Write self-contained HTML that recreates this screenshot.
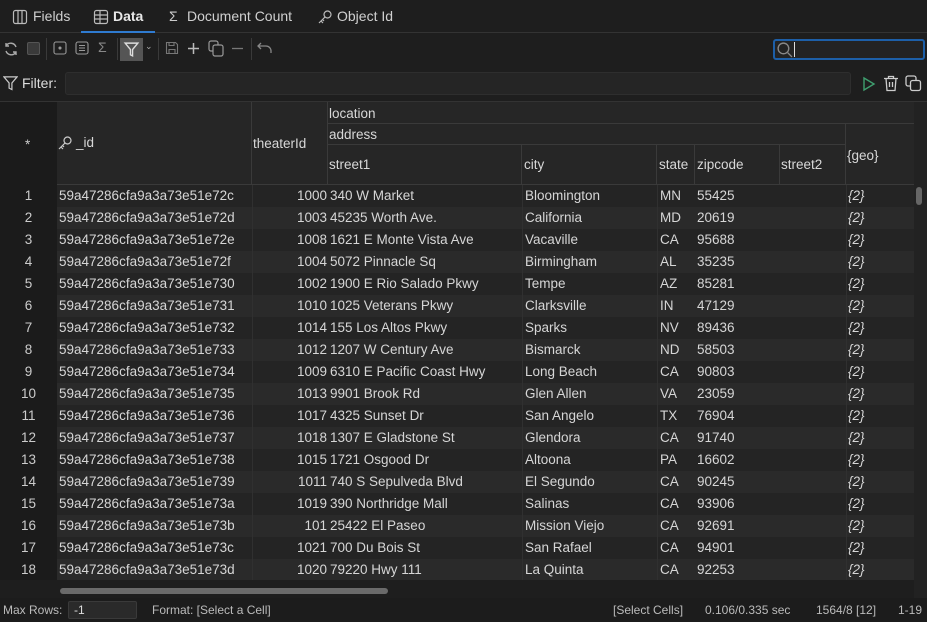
<!DOCTYPE html>
<html><head><style>
*{box-sizing:border-box;margin:0;padding:0}
body{width:927px;height:622px;background:#1e1e1e;color:#d8d8d8;font-family:"Liberation Sans",sans-serif;font-size:13.5px;position:relative;overflow:hidden}
.abs{position:absolute}
.tab{position:absolute;top:0;height:32px;line-height:33px;font-size:14px;color:#d0d0d0}
svg{position:absolute}
.t{position:absolute;white-space:nowrap}
.hd{position:absolute;background:#262626;border-right:1px solid #3a3a3a;border-bottom:1px solid #3a3a3a;color:#d0d0d0}
.row{position:absolute;left:0;width:914px;height:22px}
.c{position:absolute;top:0;height:22px;line-height:22px;white-space:nowrap;color:#d6d6d6;font-size:13.5px}
</style></head><body>
<!-- tabs -->
<div class="abs" style="left:0;top:32px;width:927px;height:1px;background:#333"></div>
<div class="abs" style="left:81px;top:31px;width:74px;height:2px;background:#2f7bd0"></div>
<svg style="left:12px;top:9px" width="16" height="16" viewBox="0 0 16 16" fill="none" stroke="#bbb" stroke-width="1.2"><rect x="1.5" y="1.5" width="13" height="13" rx="2"/><path d="M6 2v12M10 2v12"/></svg>
<div class="tab" style="left:33px">Fields</div>
<svg style="left:93px;top:9px" width="16" height="16" viewBox="0 0 16 16" fill="none" stroke="#bbb" stroke-width="1.2"><rect x="1.5" y="1.5" width="13" height="13" rx="2"/><path d="M2 6h12M2 10h12M7 2v12"/></svg>
<div class="tab" style="left:113px;font-weight:bold;color:#e8e8e8">Data</div>
<div class="tab" style="left:169px;color:#ccc">Σ</div>
<div class="tab" style="left:187px">Document Count</div>
<svg style="left:317px;top:9px" width="16" height="16" viewBox="0 0 16 16" fill="none" stroke="#bbb" stroke-width="1.2"><circle cx="10.5" cy="5.5" r="3.5"/><path d="M8 8l-6 6M4 12l2 2M5.5 10.5l1.5 1.5"/></svg>
<div class="tab" style="left:337px">Object Id</div>
<!-- toolbar -->
<svg style="left:3px;top:41px" width="16" height="16" viewBox="0 0 16 16" fill="none" stroke="#aaa" stroke-width="1.4"><path d="M13 6A5.5 5.5 0 0 0 3 5M3 10a5.5 5.5 0 0 0 10 1M3 2v3h3M13 14v-3h-3"/></svg>
<div class="abs" style="left:27px;top:42px;width:13px;height:13px;background:#3a3a3a;border:1px solid #555;border-radius:2px"></div>
<div class="abs" style="left:46px;top:38px;width:1px;height:22px;background:#3a3a3a"></div>
<svg style="left:53px;top:41px" width="14" height="14" viewBox="0 0 14 14" fill="none" stroke="#999" stroke-width="1.1"><rect x="1" y="1" width="12" height="12" rx="2"/><circle cx="7" cy="7" r="1" fill="#999"/></svg>
<svg style="left:75px;top:41px" width="14" height="14" viewBox="0 0 14 14" fill="none" stroke="#999" stroke-width="1.1"><rect x="1" y="1" width="12" height="12" rx="2"/><path d="M4 4.5h6M4 7h6M4 9.5h6"/></svg>
<div class="t" style="left:98px;top:39px;color:#888;font-size:14px">Σ</div>
<div class="abs" style="left:117px;top:38px;width:1px;height:22px;background:#3a3a3a"></div>
<div class="abs" style="left:120px;top:38px;width:23px;height:23px;background:#555"></div>
<svg style="left:123px;top:41px" width="17" height="17" viewBox="0 0 16 16" fill="none" stroke="#ddd" stroke-width="1.3"><path d="M2 2h12l-5 6v6l-2-1V8z"/></svg>
<div class="t" style="left:145px;top:41px;color:#aaa;font-size:9px">⌄</div>
<div class="abs" style="left:158px;top:38px;width:1px;height:22px;background:#3a3a3a"></div>
<svg style="left:165px;top:41px" width="14" height="14" viewBox="0 0 14 14" fill="none" stroke="#777" stroke-width="1.1"><path d="M1.5 1.5h9l2 2v9h-11z M4 1.5v3h5v-3 M4 12.5v-4h6v4"/></svg>
<svg style="left:187px;top:42px" width="13" height="13" viewBox="0 0 13 13" stroke="#bbb" stroke-width="1.5"><path d="M6.5 1v11M1 6.5h11"/></svg>
<svg style="left:208px;top:40px" width="16" height="17" viewBox="0 0 16 17" fill="none" stroke="#999" stroke-width="1.2"><rect x="1" y="1" width="9" height="10" rx="2"/><rect x="5" y="5" width="10" height="11" rx="2" fill="#1e1e1e"/></svg>
<svg style="left:231px;top:42px" width="13" height="13" viewBox="0 0 13 13" stroke="#777" stroke-width="1.3"><path d="M1 6.5h11"/></svg>
<div class="abs" style="left:251px;top:38px;width:1px;height:22px;background:#3a3a3a"></div>
<svg style="left:257px;top:42px" width="15" height="13" viewBox="0 0 15 13" fill="none" stroke="#888" stroke-width="1.3"><path d="M4 1L1 4l3 3M1 4h8a5 5 0 0 1 5 5v2"/></svg>
<div class="abs" style="left:773px;top:39px;width:152px;height:21px;border:2px solid #1d5fa8;border-radius:3px;background:#232323"></div>
<svg style="left:776px;top:41px" width="17" height="17" viewBox="0 0 16 16" fill="none" stroke="#888" stroke-width="1.3"><circle cx="7" cy="7" r="5"/><path d="M11 11l4 4"/></svg>
<div class="abs" style="left:794px;top:42px;width:1px;height:15px;background:#ddd"></div>
<!-- filter -->
<svg style="left:3px;top:75px" width="15" height="16" viewBox="0 0 16 16" fill="none" stroke="#ccc" stroke-width="1.3"><path d="M1 1.5h14l-5.5 6.5v7l-3-1.5V8z"/></svg>
<div class="t" style="left:22px;top:75px;font-size:14px;color:#ddd">Filter:</div>
<div class="abs" style="left:65px;top:72px;width:786px;height:23px;background:#252525;border:1px solid #2e2e2e;border-radius:3px"></div>
<svg style="left:862px;top:76px" width="14" height="16" viewBox="0 0 14 16" fill="none" stroke="#3f9f6f" stroke-width="1.4"><path d="M2 2l10 6-10 6z"/></svg>
<svg style="left:883px;top:75px" width="16" height="17" viewBox="0 0 16 17" fill="none" stroke="#ccc" stroke-width="1.3"><path d="M1 3.5h14M5.5 3.5V1.5h5v2M3 3.5l1 12h8l1-12M6.5 7v5M9.5 7v5"/></svg>
<svg style="left:905px;top:75px" width="17" height="17" viewBox="0 0 17 17" fill="none" stroke="#ccc" stroke-width="1.3"><rect x="1" y="1" width="10" height="10" rx="2"/><rect x="5.5" y="5.5" width="10" height="10" rx="2" fill="#1e1e1e"/></svg>
<!-- table -->
<div class="abs" style="left:0;top:101px;width:927px;height:1px;background:#333"></div>
<div class="abs" style="left:0;top:102px;width:927px;height:496px;background:#222"></div>
<div class="abs" style="left:0;top:102px;width:57px;height:496px;background:#1b1b1b"></div>
<div class="hd" style="left:57px;top:102px;width:195px;height:83px"></div>
<div class="hd" style="left:252px;top:102px;width:76px;height:83px"></div>
<div class="hd" style="left:328px;top:102px;width:586px;height:22px;border-right:none"></div>
<div class="hd" style="left:328px;top:124px;width:518px;height:21px"></div>
<div class="hd" style="left:846px;top:124px;width:68px;height:61px;border-right:none"></div>
<div class="hd" style="left:328px;top:145px;width:194px;height:40px"></div>
<div class="hd" style="left:522px;top:145px;width:135px;height:40px"></div>
<div class="hd" style="left:657px;top:145px;width:38px;height:40px"></div>
<div class="hd" style="left:695px;top:145px;width:85px;height:40px"></div>
<div class="hd" style="left:780px;top:145px;width:66px;height:40px"></div>
<div class="t" style="left:25px;top:137px;color:#ccc">*</div>
<svg style="left:57px;top:135px" width="16" height="16" viewBox="0 0 16 16" fill="none" stroke="#ccc" stroke-width="1.2"><circle cx="10.5" cy="5.5" r="3.5"/><path d="M8 8l-6 6M4 12l2 2M5.5 10.5l1.5 1.5"/></svg>
<div class="t" style="left:76px;top:135px">_id</div>
<div class="t" style="left:253px;top:136px">theaterId</div>
<div class="t" style="left:329px;top:106px">location</div>
<div class="t" style="left:329px;top:127px">address</div>
<div class="t" style="left:329px;top:157px">street1</div>
<div class="t" style="left:524px;top:157px">city</div>
<div class="t" style="left:659px;top:157px">state</div>
<div class="t" style="left:697px;top:157px">zipcode</div>
<div class="t" style="left:781px;top:157px">street2</div>
<div class="t" style="left:847px;top:148px">{geo}</div>
<div id="rows"></div>
<!-- vertical scroll -->
<div class="abs" style="left:916px;top:187px;width:6px;height:18px;background:#666;border-radius:3px"></div>
<!-- horizontal scroll -->
<div class="abs" style="left:0;top:580px;width:914px;height:18px;background:#1e1e1e"></div>
<div class="abs" style="left:60px;top:588px;width:328px;height:6px;background:#6a6a6a;border-radius:3px"></div>
<!-- status -->
<div class="abs" style="left:0;top:598px;width:927px;height:24px;background:#1c1c1c"></div>
<div class="t" style="left:3px;top:603px;font-size:12px;color:#bbb">Max Rows:</div>
<div class="abs" style="left:68px;top:601px;width:69px;height:18px;background:#2a2a2a;border:1px solid #3a3a3a;border-radius:2px"></div>
<div class="t" style="left:74px;top:603px;font-size:12px;color:#ddd">-1</div>
<div class="t" style="left:152px;top:603px;font-size:12px;color:#bbb">Format: [Select a Cell]</div>
<div class="t" style="left:613px;top:603px;font-size:12px;color:#bbb">[Select Cells]</div>
<div class="t" style="left:705px;top:603px;font-size:12px;color:#bbb">0.106/0.335 sec</div>
<div class="t" style="left:816px;top:603px;font-size:12px;color:#bbb">1564/8 [12]</div>
<div class="t" style="left:898px;top:603px;font-size:12px;color:#bbb">1-19</div>
<script>
var d=[["72c",1000,"340 W Market","Bloomington","MN","55425"],["72d",1003,"45235 Worth Ave.","California","MD","20619"],["72e",1008,"1621 E Monte Vista Ave","Vacaville","CA","95688"],["72f",1004,"5072 Pinnacle Sq","Birmingham","AL","35235"],["730",1002,"1900 E Rio Salado Pkwy","Tempe","AZ","85281"],["731",1010,"1025 Veterans Pkwy","Clarksville","IN","47129"],["732",1014,"155 Los Altos Pkwy","Sparks","NV","89436"],["733",1012,"1207 W Century Ave","Bismarck","ND","58503"],["734",1009,"6310 E Pacific Coast Hwy","Long Beach","CA","90803"],["735",1013,"9901 Brook Rd","Glen Allen","VA","23059"],["736",1017,"4325 Sunset Dr","San Angelo","TX","76904"],["737",1018,"1307 E Gladstone St","Glendora","CA","91740"],["738",1015,"1721 Osgood Dr","Altoona","PA","16602"],["739",1011,"740 S Sepulveda Blvd","El Segundo","CA","90245"],["73a",1019,"390 Northridge Mall","Salinas","CA","93906"],["73b",101,"25422 El Paseo","Mission Viejo","CA","92691"],["73c",1021,"700 Du Bois St","San Rafael","CA","94901"],["73d",1020,"79220 Hwy 111","La Quinta","CA","92253"],["73e",1022,"","","",""]];
var h="";d.forEach(function(r,i){var y=185+i*22;var bg=i%2?"#2a2a2a":"#242424";
h+='<div class="row" style="top:'+y+'px"><div class="abs" style="left:57px;top:0;width:857px;height:22px;background:'+bg+'"></div>'+
'<div class="abs" style="left:0;top:0;width:57px;height:22px;background:#1b1b1b"></div>'+
'<div class="c" style="left:0;width:57px;text-align:center;color:#ccc">'+(i+1)+'</div>'+
'<div class="c" style="left:59px">59a47286cfa9a3a73e51e'+r[0]+'</div>'+
'<div class="c" style="left:252px;width:75px;text-align:right">'+r[1]+'</div>'+
'<div class="c" style="left:330px">'+r[2]+'</div><div class="c" style="left:525px">'+r[3]+'</div>'+
'<div class="c" style="left:660px">'+r[4]+'</div><div class="c" style="left:697px">'+r[5]+'</div>'+
'<div class="c" style="left:848px;font-style:italic">{2}</div>'+
'<div class="abs" style="left:252px;top:0;width:1px;height:22px;background:#303030"></div><div class="abs" style="left:522px;top:0;width:1px;height:22px;background:#303030"></div><div class="abs" style="left:657px;top:0;width:1px;height:22px;background:#303030"></div><div class="abs" style="left:846px;top:0;width:1px;height:22px;background:#303030"></div></div>';});
document.getElementById("rows").innerHTML=h;
</script>
</body></html>
